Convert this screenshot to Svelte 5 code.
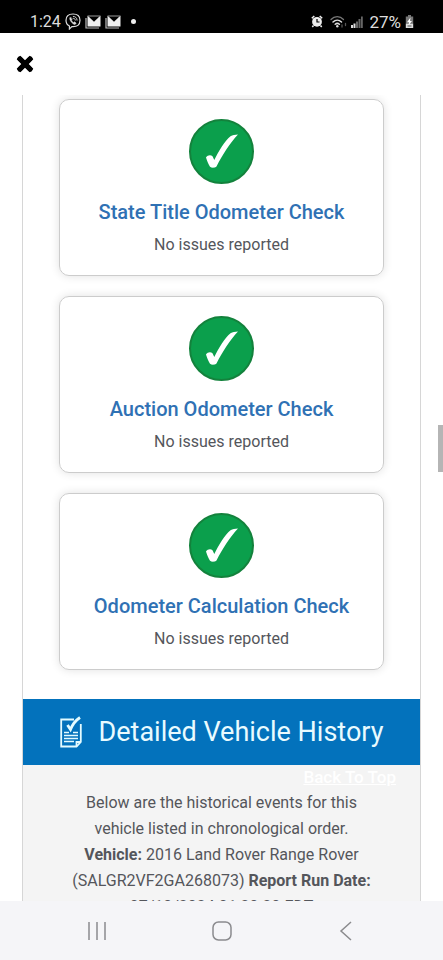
<script lang="ts">
  const checks = [
    { title: 'State Title Odometer Check', result: 'No issues reported' },
    { title: 'Auction Odometer Check', result: 'No issues reported' },
    { title: 'Odometer Calculation Check', result: 'No issues reported' }
  ];

  const vehicle = '2016 Land Rover Range Rover (SALGR2VF2GA268073)';
  const runDate = '07/10/2024 01:20:20 EDT';
</script>

<div class="screen">
  <div class="status-bar">
    <div class="status-left">
      <span class="time">1:24</span>
      <svg class="viber" width="16" height="17" viewBox="0 0 16 17" fill="none" stroke="#ddd" stroke-width="1.2" stroke-linecap="round">
        <path d="M8 1C3.6 1 1 2.8 1 7.300c0 3 1.200 4.800 3.400 5.700V16l2.500-2.400c5.400.4 8.100-1.600 8.100-6.300C15 2.800 12.400 1 8 1z" />
        <path d="M5.200 4.200c-1.600 1.300.9 5.700 4 7.200 1 .4 1.900-.7 1.900-1.300L9.500 8.800l-.9.800C7.600 9.200 6.700 8.200 6.400 7l.8-.8z" fill="#ddd" stroke-width=".5" />
        <path d="M8.300 3.400c2.300.1 3.700 1.500 3.800 3.800M8.500 5.300c1.100.1 1.700.7 1.800 1.800" stroke-width=".9" />
      </svg>
      {#each [0, 1] as mail (mail)}
        <svg width="16" height="14" viewBox="0 0 16 14">
          <path d="M1 3v10h13" fill="none" stroke="#bbb" stroke-width="1.200" />
          <path d="M2.500 1h13v10.500h-13z" fill="#eee" />
          <path d="M3 1h12L9 6.800z" fill="#000" />
          <path d="M2.500 1h13" stroke="#999" />
        </svg>
      {/each}
      <span class="dot"></span>
    </div>
    <div class="status-right">
      <svg width="12" height="13" viewBox="0 0 12 13">
        <path d="M.8 3.300L3.300 1M11.200 3.300L8.700 1M2.500 10.500L1.300 12M9.500 10.500l1.200 1.500" stroke="#eee" stroke-width="1.500" />
        <circle cx="6" cy="6.800" r="4.900" fill="#eee" />
        <path d="M6 4v3h2.500" fill="none" stroke="#000" stroke-width="1.200" />
      </svg>
      <svg class="wifi" width="17" height="13" viewBox="0 0 17 13" fill="none" stroke-linecap="round">
        <path d="M1 4.500C4.500.7 10 .7 13.500 4.500" stroke="#777" stroke-width="1.300" />
        <path d="M3 7c2.500-2.500 6-2.500 8.500 0M5.200 9.300c1.400-1.200 2.800-1.200 4.200 0" stroke="#ddd" stroke-width="1.500" />
        <circle cx="7.300" cy="11.300" r="1.200" fill="#ddd" />
        <path d="M12 10v2M15.500 8.500v2" stroke="#555" stroke-width="1.300" />
      </svg>
      <svg width="12" height="12" viewBox="0 0 12 12">
        <path d="M0 9h2v3H0zM2.500 7.500h2V12h-2z" fill="#ddd" />
        <path d="M5 5.500h2V12H5zM7.500 3h2v9h-2zM10 .5h1.800V12H10z" fill="#666" />
      </svg>
      <span class="percent">27%</span>
      <svg width="9" height="13" viewBox="0 0 9 13">
        <path d="M3 0h3v1.500h2.200V9H.8V1.500H3z" fill="#777" />
        <path d="M.8 8.800h7.400V13H.8z" fill="#ddd" />
        <path d="M5.500 2.500L2 7.300h2L3.500 10.500 7 6H5z" fill="#fff" />
        <path d="M2.500 11h4" stroke="#555" />
      </svg>
    </div>
  </div>

  <header class="top">
    <button class="close" aria-label="Close">
      <svg width="18" height="18" viewBox="0 0 18 18" stroke="#000" stroke-width="5">
        <path d="M2.500 2.500l13 13M15.500 2.500l-13 13" stroke-linecap="butt" />
        <path d="M3.800 3.800l10.400 10.400M14.200 3.800L3.800 14.200" stroke-linecap="round" />
      </svg>
    </button>
  </header>

  <main class="scroller">
    <div class="report">
      <section class="checks">
        {#each checks as check}
          <article class="card">
            <svg class="check" viewBox="0 0 65 65">
              <circle cx="32.500" cy="32.500" r="31.500" fill="#0b9f4c" stroke="#13823c" stroke-width="2" />
              <path d="M17 38.500c1.500-2.500 4.800-3 6.500-1.200l1.800 3.700C30 31.500 35.500 22.500 41.500 17.300c2-1.300 4.500-1.500 7.500-1.700C41 24 33.500 36 27.500 47.500c-1.500 1.500-5 1.500-6.500.3-1.500-2.500-3-5.800-4-9.300z" fill="#fff" />
            </svg>
            <h3>{check.title}</h3>
            <p>{check.result}</p>
          </article>
        {/each}
      </section>

      <section class="history">
        <h2>
          <svg width="22" height="32" viewBox="0 0 22 32" fill="none" stroke="#e4fbff" stroke-width="1.800">
            <path d="M14 3.500H1.200V30.500h15.300l4.300-4.500V8" />
            <path d="M16.500 30.500V26h4.300" />
            <path d="M7.500 9l3 4.500C12.500 8.500 15.500 4.500 20 1.500" stroke-width="2.800" />
            <path d="M4 16.500h5M13 16.500h5M4 19.500h14M4 22.500h14M4 25.500h10" stroke-width="1.300" />
          </svg>
          <span>Detailed Vehicle History</span>
        </h2>
        <div class="history-body">
          <a class="back" href="#top">Back To Top</a>
          <p>
            Below are the historical events for this vehicle listed in chronological order.<br />
            <strong>Vehicle:</strong> {vehicle} <strong>Report Run Date:</strong> {runDate}
          </p>
        </div>
      </section>
    </div>
    <div class="thumb"></div>
  </main>

  <nav class="nav-bar">
    <button aria-label="Recent apps">
      <svg width="20" height="20" viewBox="0 0 20 20" stroke="#8b8b8e" stroke-width="1.500">
        <path d="M2 1v18M10 1v18M18 1v18" />
      </svg>
    </button>
    <button aria-label="Home">
      <svg width="20" height="20" viewBox="0 0 20 20" fill="none" stroke="#8b8b8e" stroke-width="1.500">
        <rect x="1" y="1" width="18" height="18" rx="5.500" />
      </svg>
    </button>
    <button aria-label="Back">
      <svg width="20" height="20" viewBox="0 0 20 20" fill="none" stroke="#8b8b8e" stroke-width="1.500">
        <path d="M14 1L4 10l10 9" />
      </svg>
    </button>
  </nav>
</div>

<style>
  :global(body) {
    margin: 0;
    background: #fff;
  }

  .screen {
    display: flex;
    flex-direction: column;
    height: 100vh;
    font-family: Roboto, "Liberation Sans", sans-serif;
    font-size: 16px;
    line-height: 26px;
    color: #54565b;
  }

  .status-bar {
    display: flex;
    justify-content: space-between;
    align-items: center;
    box-sizing: border-box;
    height: 33px;
    padding: 10px 29px 0 30px;
    background: #000;
    color: #ddd;
  }

  .status-left,
  .status-right {
    display: flex;
    align-items: center;
    gap: 4px;
  }

  .time,
  .percent {
    line-height: 20px;
  }

  .percent {
    margin-left: 2px;
    font-size: 17px;
  }

  .wifi {
    margin-left: 3px;
  }

  .dot {
    width: 5px;
    height: 5px;
    margin-left: 6px;
    border-radius: 50%;
    background: #eee;
  }

  .top {
    display: flex;
    align-items: center;
    height: 62px;
    padding: 0 16px;
  }

  button {
    display: flex;
    padding: 0;
    border: 0;
    background: none;
  }

  .scroller {
    position: relative;
    flex: 1;
    min-height: 0;
    overflow: hidden;
  }

  .report {
    margin: 0 22px;
    border: solid #d6d6d6;
    border-width: 0 1px;
  }

  .checks {
    display: flex;
    flex-direction: column;
    gap: 20px;
    padding: 4px 36px 29px;
  }

  .card {
    display: flex;
    flex-direction: column;
    align-items: center;
    padding: 19px 0 17px;
    border: 1px solid #ccc;
    border-radius: 10px;
    box-shadow: 0 0 10px rgba(0, 0, 0, 0.12);
    text-align: center;
  }

  .check {
    width: 65px;
    height: 65px;
  }

  h3 {
    margin: 15px 0 7px;
    font-size: 20px;
    font-weight: 500;
    line-height: 26px;
    color: #2f71b4;
  }

  p {
    margin: 0;
  }

  h2 {
    display: flex;
    align-items: center;
    justify-content: center;
    gap: 17px;
    height: 66px;
    margin: 0;
    background: #0372bc;
    color: #e9fbff;
    font-size: 27px;
    font-weight: 400;
  }

  .history-body {
    display: flex;
    flex-direction: column;
    padding: 0 24px 30px;
    background: #f4f4f4;
    text-align: center;
  }

  .history-body p {
    padding: 0 20px;
  }

  .back {
    align-self: flex-end;
    font-size: 17px;
    font-weight: 500;
    line-height: 25px;
    color: #fff;
  }

  .thumb {
    position: absolute;
    top: 41%;
    right: 0;
    width: 5px;
    height: 47px;
    background: #b5b5b5;
  }

  .nav-bar {
    display: flex;
    justify-content: space-around;
    align-items: center;
    height: 59px;
    padding: 0 34px;
    background: #f5f5f8;
  }
</style>
